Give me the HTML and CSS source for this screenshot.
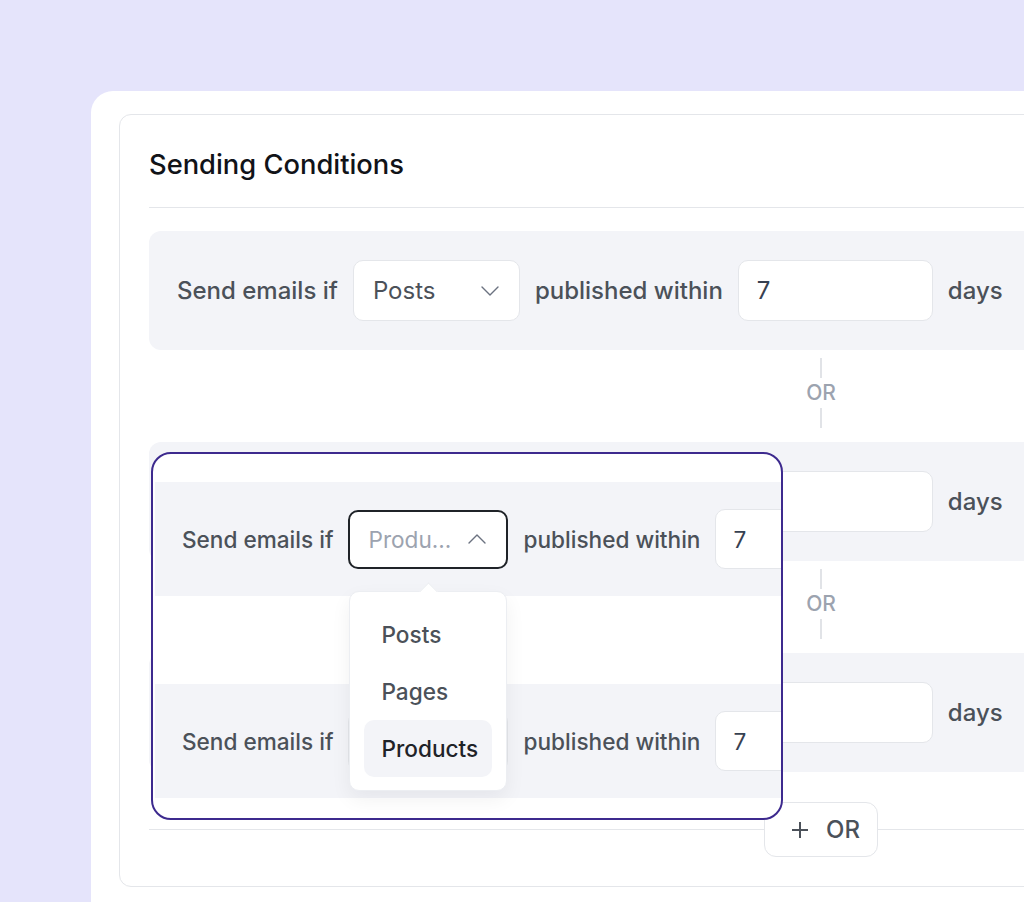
FILE: index.html
```html
<!DOCTYPE html>
<html lang="en">
<head>
  <meta charset="UTF-8" />
  <meta name="viewport" content="width=device-width, initial-scale=1" />
  <title>Sending Conditions</title>
  <link rel="stylesheet" href="styles.css">
</head>
<body>
  <div class="frame">
    <section class="card">
      <h2 class="card-title">Sending Conditions</h2>

      <div class="conditions">
        <div class="cond-row">
          <span class="cond-label">Send emails if</span>
          <div class="select">
            <span class="select-value">Posts</span>
            <svg class="chevron" width="18" height="10" viewBox="0 0 18 10"><path d="M1 1l8 8 8-8" /></svg>
          </div>
          <span class="cond-label">published within</span>
          <div class="num-input">7</div>
          <span class="cond-label">days</span>
        </div>

        <div class="or-sep">
          <span class="or-line"></span>
          <span class="or-text">OR</span>
          <span class="or-line"></span>
        </div>

        <div class="cond-row">
          <span class="cond-label">Send emails if</span>
          <div class="select">
            <svg class="chevron" width="18" height="10" viewBox="0 0 18 10"><path d="M1 1l8 8 8-8" /></svg>
          </div>
          <span class="cond-label">published within</span>
          <div class="num-input"></div>
          <span class="cond-label">days</span>
        </div>

        <div class="or-sep">
          <span class="or-line"></span>
          <span class="or-text">OR</span>
          <span class="or-line"></span>
        </div>

        <div class="cond-row">
          <span class="cond-label">Send emails if</span>
          <div class="select">
            <svg class="chevron" width="18" height="10" viewBox="0 0 18 10"><path d="M1 1l8 8 8-8" /></svg>
          </div>
          <span class="cond-label">published within</span>
          <div class="num-input"></div>
          <span class="cond-label">days</span>
        </div>
      </div>

      <div class="add-row">
        <span class="rule rule-left"></span>
        <button class="add-or" type="button">
          <svg width="18" height="18" viewBox="0 0 18 18"><path d="M9 1v16M1 9h16" /></svg>
          OR
        </button>
        <span class="rule"></span>
      </div>
    </section>

    <!-- close-up of the open type picker -->
    <div class="lens">
      <div class="cond-row small">
        <span class="cond-label">Send emails if</span>
        <div class="select-wrap">
          <div class="select open">
            <span class="select-value placeholder">Products</span>
            <svg class="chevron" width="18" height="10" viewBox="0 0 18 10"><path d="M1 9l8-8 8 8" /></svg>
          </div>
          <ul class="menu">
            <li>Posts</li>
            <li>Pages</li>
            <li class="active">Products</li>
          </ul>
        </div>
        <span class="cond-label">published within</span>
        <div class="num-input">7</div>
      </div>

      <div class="cond-row small">
        <span class="cond-label">Send emails if</span>
        <div class="select-wrap">
          <div class="select"></div>
        </div>
        <span class="cond-label">published within</span>
        <div class="num-input">7</div>
      </div>
    </div>
  </div>
</body>
</html>
```

FILE: styles.css
```css
body {
  margin: 0;
  height: 902px;
  overflow: hidden;
  background-color: #e5e4fb;
  font-family: Inter, 'Noto Sans', sans-serif;
}

.frame {
  position: relative;
  width: 1000px;
  height: 860px;
  margin: 91px 0 0 91px;
  padding: 23px 0 0 28px;
  background-color: white;
  border-radius: 22px 0 0 0;
}

.card {
  width: 960px;
  padding: 34px 0 29px 29px;
  border: 1px solid #e4e6ea;
  border-radius: 12px;
}

.card-title {
  margin: 0;
  padding-bottom: 26px;
  border-bottom: 1px solid #e4e6ea;
  font-size: 27.3px;
  line-height: 32px;
  font-weight: 500;
  color: #111318;
}

.conditions {
  margin-top: 23px;
}

.cond-row {
  display: flex;
  align-items: center;
  gap: 15px;
  height: 119px;
  padding: 0 28px;
  box-sizing: border-box;
  background-color: #f3f4f8;
  border-radius: 12px;
}

.cond-label {
  font-size: 24px;
  font-weight: 500;
  color: #4b5159;
  white-space: nowrap;
}

.select {
  display: flex;
  align-items: center;
  justify-content: space-between;
  width: 167px;
  height: 61px;
  padding: 0 20px 0 19px;
  box-sizing: border-box;
  background: white;
  border: 1px solid #e4e6ea;
  border-radius: 10px;
  font-size: 24px;
  color: #4b5159;
}

.chevron {
  margin-left: auto;
}

.chevron path {
  fill: none;
  stroke: #6b7280;
  stroke-width: 1.4;
  stroke-linecap: round;
  stroke-linejoin: round;
}

.num-input {
  display: flex;
  align-items: center;
  width: 195px;
  height: 61px;
  padding-left: 18px;
  box-sizing: border-box;
  background: white;
  border: 1px solid #e4e6ea;
  border-radius: 10px;
  font-size: 24px;
  color: #374151;
}

.or-sep {
  display: flex;
  flex-direction: column;
  align-items: center;
  width: 40px;
  height: 92px;
  margin-left: 652px;
  padding: 8px 0 14px;
  box-sizing: border-box;
}

.or-line {
  width: 2px;
  flex: 1;
  background-color: #e1e3e7;
}

.or-text {
  line-height: 30px;
  font-size: 21px;
  font-weight: 500;
  color: #9ca3af;
}

.add-row {
  display: flex;
  align-items: center;
  margin-top: 30px;
}

.rule {
  flex: 1;
  height: 1px;
  background-color: #e4e6ea;
}

.rule-left {
  flex: none;
  width: 615px;
}

.add-or {
  display: flex;
  align-items: center;
  gap: 17px;
  width: 114px;
  height: 55px;
  padding: 0 0 0 26px;
  background: white;
  border: 1px solid #e4e6ea;
  border-radius: 12px;
  font-family: inherit;
  font-size: 24px;
  font-weight: 500;
  color: #4b5159;
}

.add-or path {
  stroke: #4b5159;
  stroke-width: 2;
}

/* magnified panel */
.lens {
  position: absolute;
  left: 60px;
  top: 361px;
  width: 632px;
  height: 368px;
  box-sizing: border-box;
  padding: 28px 0 0 2px;
  background: white;
  border: 2px solid #3d2a8e;
  border-radius: 20px;
  overflow: hidden;
  z-index: 5;
}

.cond-row.small {
  width: 700px;
  height: 114px;
  padding: 0 0 0 27px;
  border-radius: 0;
}

.cond-row.small + .cond-row.small {
  margin-top: 88px;
}

.small .cond-label,
.small .select,
.small .num-input {
  font-size: 22.6px;
}

.small .select {
  width: 160px;
  height: 59px;
}

.small .num-input {
  height: 60px;
  padding-left: 17px;
}

.select.open {
  border: 2px solid #1f2328;
  padding-left: 18px;
}

.placeholder {
  width: 84px;
  overflow: hidden;
  white-space: nowrap;
  text-overflow: ellipsis;
  color: #9ca3af;
}

.select-wrap {
  position: relative;
}

.menu {
  position: absolute;
  top: calc(100% + 22px);
  left: 1px;
  z-index: 2;
  width: 158px;
  margin: 0;
  padding: 14px 14px 13px;
  box-sizing: border-box;
  list-style: none;
  background: white;
  border: 1px solid #eceef2;
  border-radius: 10px;
  box-shadow: 0 8px 20px rgba(17, 24, 39, 0.06);
}

.menu::before {
  content: "";
  position: absolute;
  top: -7px;
  left: 72px;
  width: 12px;
  height: 12px;
  background: white;
  border-top: 1px solid #eceef2;
  border-left: 1px solid #eceef2;
  transform: rotate(45deg);
}

.menu li {
  height: 57px;
  padding-left: 17px;
  line-height: 57px;
  font-size: 22.6px;
  font-weight: 500;
  color: #4b5159;
  border-radius: 10px;
}

.menu li.active {
  background-color: #f3f4f8;
  color: #1f2328;
}
```
